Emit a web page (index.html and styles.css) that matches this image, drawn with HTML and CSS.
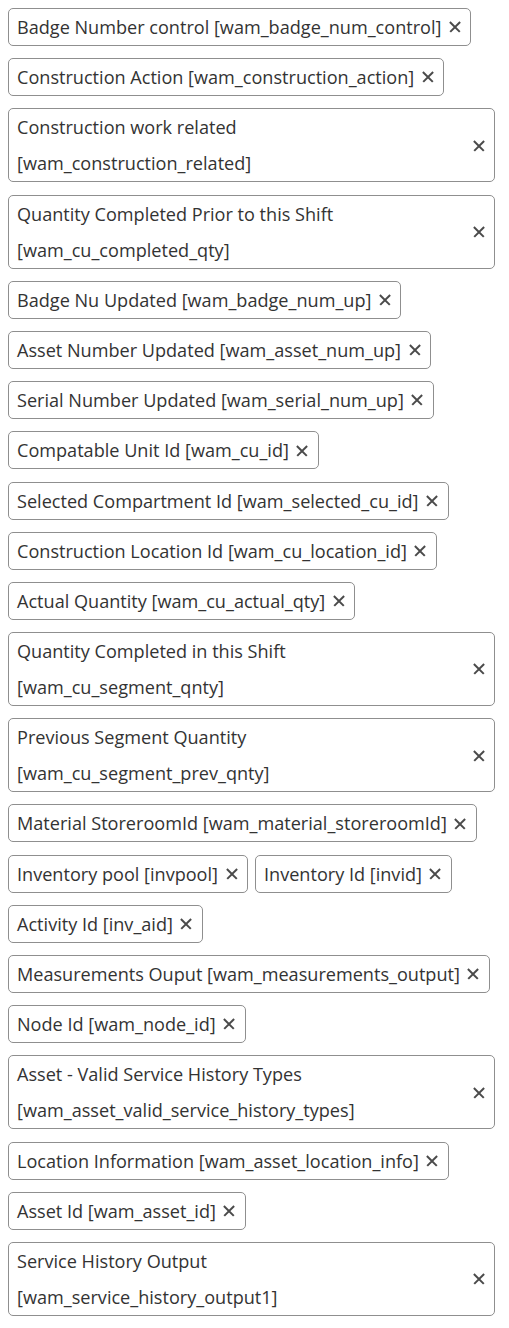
FILE: index.html
```html
<!DOCTYPE html>
<html>
<head>
<meta charset="utf-8">
<link rel="stylesheet" href="styles.css">
</head>
<body>
<div class="chips">
  <span class="chip"><span class="label">Badge Number control [wam_badge_num_control]</span><span class="x"></span></span>
  <span class="chip"><span class="label">Construction Action [wam_construction_action]</span><span class="x"></span></span>
  <span class="chip"><span class="label">Construction work related [wam_construction_related]</span><span class="x"></span></span>
  <span class="chip"><span class="label">Quantity Completed Prior to this Shift [wam_cu_completed_qty]</span><span class="x"></span></span>
  <span class="chip"><span class="label">Badge Nu Updated [wam_badge_num_up]</span><span class="x"></span></span>
  <span class="chip"><span class="label">Asset Number Updated [wam_asset_num_up]</span><span class="x"></span></span>
  <span class="chip"><span class="label">Serial Number Updated [wam_serial_num_up]</span><span class="x"></span></span>
  <span class="chip"><span class="label">Compatable Unit Id [wam_cu_id]</span><span class="x"></span></span>
  <span class="chip"><span class="label">Selected Compartment Id [wam_selected_cu_id]</span><span class="x"></span></span>
  <span class="chip"><span class="label">Construction Location Id [wam_cu_location_id]</span><span class="x"></span></span>
  <span class="chip"><span class="label">Actual Quantity [wam_cu_actual_qty]</span><span class="x"></span></span>
  <span class="chip"><span class="label">Quantity Completed in this Shift [wam_cu_segment_qnty]</span><span class="x"></span></span>
  <span class="chip"><span class="label">Previous Segment Quantity [wam_cu_segment_prev_qnty]</span><span class="x"></span></span>
  <span class="chip"><span class="label">Material StoreroomId [wam_material_storeroomId]</span><span class="x"></span></span>
  <span class="chip"><span class="label">Inventory pool [invpool]</span><span class="x"></span></span>
  <span class="chip"><span class="label">Inventory Id [invid]</span><span class="x"></span></span>
  <span class="chip"><span class="label">Activity Id [inv_aid]</span><span class="x"></span></span>
  <span class="chip"><span class="label">Measurements Ouput [wam_measurements_output]</span><span class="x"></span></span>
  <span class="chip"><span class="label">Node Id [wam_node_id]</span><span class="x"></span></span>
  <span class="chip"><span class="label">Asset - Valid Service History Types [wam_asset_valid_service_history_types]</span><span class="x"></span></span>
  <span class="chip"><span class="label">Location Information [wam_asset_location_info]</span><span class="x"></span></span>
  <span class="chip"><span class="label">Asset Id [wam_asset_id]</span><span class="x"></span></span>
  <span class="chip"><span class="label">Service History Output [wam_service_history_output1]</span><span class="x"></span></span>
</div>
</body>
</html>
```

FILE: styles.css
```css
html, body {
  margin: 0;
  background: #ffffff;
}

body {
  padding: 8px;
  font-family: "Open Sans", "Noto Sans", sans-serif;
  font-size: 18.1px;
  color: #333333;
}

.chips {
  width: 487px;
  display: flex;
  flex-wrap: wrap;
  row-gap: 12.2px;
  column-gap: 7px;
  align-items: flex-start;
}

.chip {
  display: inline-flex;
  align-items: center;
  max-width: 100%;
  box-sizing: border-box;
  border: 1px solid #8f8f8f;
  border-radius: 5px;
  padding: 0 10px 0 8px;
  line-height: 36px;
}

.label {
  flex: 1 1 auto;
  min-width: 0;
}

.x {
  flex: 0 0 auto;
  width: 11px;
  height: 11px;
  margin-left: 8px;
  position: relative;
}

.x::before,
.x::after {
  content: "";
  position: absolute;
  left: -1.5px;
  top: 4.8px;
  width: 14px;
  height: 1.5px;
  background: #4a4a4a;
  transform: rotate(45deg);
}

.x::after {
  transform: rotate(-45deg);
}
```
